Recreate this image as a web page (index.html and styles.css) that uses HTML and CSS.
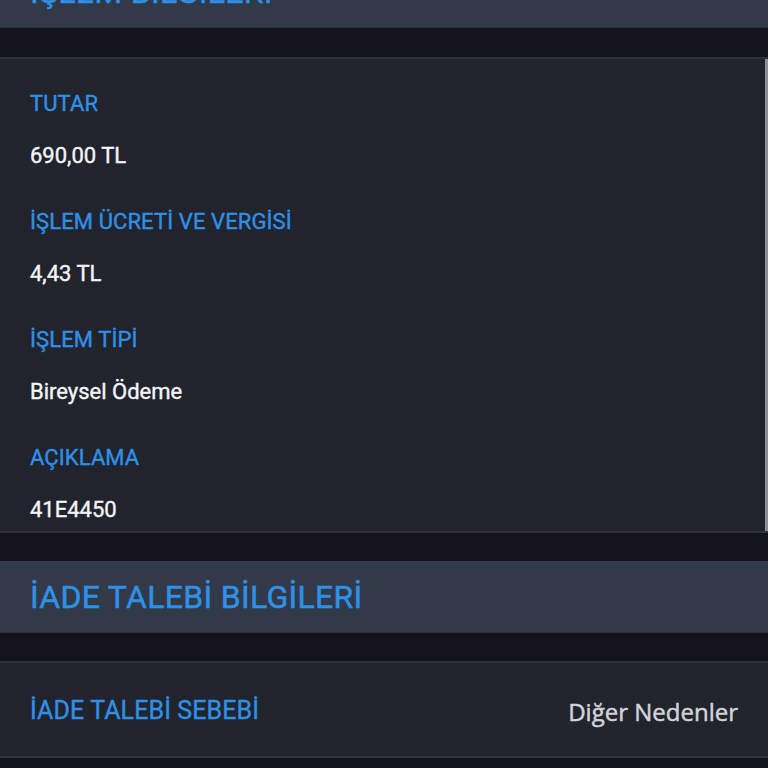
FILE: index.html
```html
<!DOCTYPE html>
<html lang="tr">
<head>
    <meta charset="UTF-8">
    <title>İşlem Detayı</title>
    <link rel="stylesheet" href="styles.css">
</head>
<body>
    <div class="page">
        <!-- Başlık: İşlem bilgileri (üstte kırpılmış) -->
        <div class="section-head head-top">
            <h2>İŞLEM BİLGİLERİ</h2>
        </div>

        <div class="card card-scroll">
            <div class="field">
                <div class="label">TUTAR</div>
                <div class="value">690,00 TL</div>
            </div>
            <div class="field">
                <div class="label">İŞLEM ÜCRETİ VE VERGİSİ</div>
                <div class="value">4,43 TL</div>
            </div>
            <div class="field">
                <div class="label">İŞLEM TİPİ</div>
                <div class="value">Bireysel Ödeme</div>
            </div>
            <div class="field">
                <div class="label">AÇIKLAMA</div>
                <div class="value">41E4450</div>
            </div>
        </div>

        <!-- Başlık: İade talebi -->
        <div class="section-head">
            <h2>İADE TALEBİ BİLGİLERİ</h2>
        </div>

        <div class="card">
            <div class="row">
                <div class="label row-label">İADE TALEBİ SEBEBİ</div>
                <div class="row-value">Diğer Nedenler</div>
            </div>
        </div>
    </div>
</body>
</html>
```

FILE: styles.css
```css
html, body { margin: 0; padding: 0; background: #14131b; }
body { font-family: Roboto, "Noto Sans", Arial, sans-serif; overflow: hidden; height: 768px; }
.page { display: flex; flex-direction: column; gap: 28px; }

.section-head { height: 72px; background: #323948; border-bottom: 1px solid #2a303d; box-sizing: border-box; display: flex; align-items: center; padding: 0 30px; }
.section-head h2 { margin: 0; font-size: 32px; font-weight: 400; color: #2f90e6; letter-spacing: 0.3px; -webkit-text-stroke: 0.5px #2f90e6; }
.head-top { margin-top: -44px; }

.card { background: #21232d; border-top: 2px solid #2d2f3a; border-bottom: 2px solid #30323e; position: relative; }
.card-scroll { padding: 30px 0 0; margin-top: 1px; }
.card-scroll::after { content: ""; position: absolute; right: 0; top: 0; bottom: 0; width: 3px; background: #8d8e95; }

.field { padding: 0 30px; height: 118px; box-sizing: border-box; }
.field:last-child { height: 88px; }
.label { font-size: 22px; font-weight: 400; color: #2f90e6; line-height: 30px; letter-spacing: 0.1px; -webkit-text-stroke: 0.4px #2f90e6; }
.value { font-size: 22px; font-weight: 400; color: #f4f4f6; line-height: 30px; margin-top: 22px; -webkit-text-stroke: 0.4px #f4f4f6; }

.row { display: flex; justify-content: space-between; align-items: center; height: 93px; padding: 3px 30px 0; box-sizing: border-box; }
.row-label { font-size: 25px; }
.row-value { font-family: "Open Sans", "Noto Sans", sans-serif; font-size: 24px; font-weight: 400; color: #d2d3d9; -webkit-text-stroke: 0.5px #d2d3d9; }
```
